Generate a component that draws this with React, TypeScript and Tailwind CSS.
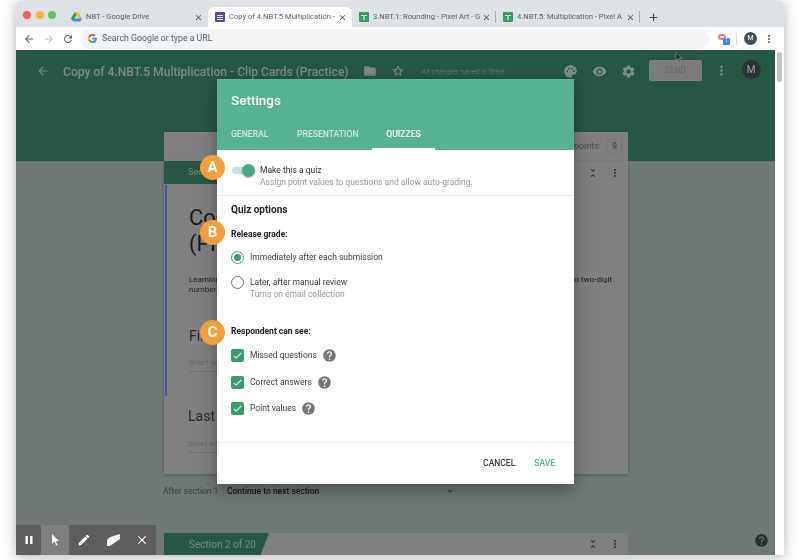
import React from "react";
import {
  MdAdd,
  MdArrowBack,
  MdArrowForward,
  MdCheck,
  MdClose,
  MdEdit,
  MdExpandMore,
  MdFolder,
  MdHelp,
  MdMoreVert,
  MdPalette,
  MdPause,
  MdRefresh,
  MdSettings,
  MdStarBorder,
  MdUnfoldLess,
  MdVisibility,
} from "react-icons/md";

const DriveLogo = () => (
  <svg width="11" height="10" viewBox="0 0 22 20">
    <path d="M7.5 0h7l7.5 13h-7z" fill="#f5bd2c" />
    <path d="M7.5 0l3.5 6.2L4 19 0 13z" fill="#1fa463" />
    <path d="M7.5 13H22l-3.5 6H4z" fill="#4285f4" />
  </svg>
);

const FormsLogo = () => (
  <div className="w-[10px] h-[10px] rounded-[1px] bg-[#5b3fb5] flex flex-col justify-center items-center gap-[1px]">
    <div className="w-[6px] h-[1px] bg-white" />
    <div className="w-[6px] h-[1px] bg-white" />
    <div className="w-[6px] h-[1px] bg-white" />
  </div>
);

const SheetsLogo = () => (
  <svg width="10" height="10" viewBox="0 0 10 10">
    <rect width="10" height="10" rx="1" fill="#2f9e5b" />
    <path d="M2 3h6v1H5.5v4h-1V4H2z" fill="#fff" />
  </svg>
);

const GoogleG = () => (
  <svg width="9" height="9" viewBox="0 0 18 18">
    <path d="M17.6 9.2c0-.6-.1-1.2-.2-1.8H9v3.5h4.8c-.2 1.100-.8 2.100-1.800 2.700v2.200h2.900c1.700-1.600 2.700-3.900 2.700-6.600z" fill="#4285f4" />
    <path d="M9 18c2.400 0 4.500-.8 5.900-2.200L12 13.600c-.8.500-1.800.9-3 .9-2.300 0-4.300-1.600-5-3.700H1v2.300C2.500 16 5.500 18 9 18z" fill="#34a853" />
    <path d="M4 10.700c-.4-1.100-.4-2.300 0-3.400V5H1C-.3 7.500-.3 10.500 1 13z" fill="#fbbc05" />
    <path d="M9 3.600c1.300 0 2.500.5 3.400 1.300L15 2.400C13.400.9 11.300 0 9 0 5.500 0 2.500 2 1 5l3 2.300c.7-2.100 2.700-3.700 5-3.700z" fill="#ea4335" />
  </svg>
);

const Tab = (props: { icon: React.ReactNode; title: string; active?: boolean; divider?: boolean }) => (
  <div className={`w-[144px] h-[20px] flex items-center pl-[7px] shrink-0 relative ${props.active ? "bg-white rounded-t-[6px]" : ""}`}>
    {props.icon}
    <div className="ml-[4px] whitespace-nowrap text-[7.6px] text-[#5f6368]">{props.title}</div>
    <MdClose className="absolute right-[5px] text-[#4a4a4a]" size={9} />
    {props.divider && <div className="absolute right-0 h-[12px] w-px bg-[#a9acb0]" />}
  </div>
);

const Badge = (props: { letter: string; className: string }) => (
  <div className={`absolute left-[184px] w-[25px] h-[25px] rounded-full bg-[#f0a03c] text-white font-bold text-[15px] flex justify-center items-center ${props.className}`}>
    {props.letter}
  </div>
);

const CheckRow = (props: { label: string; className: string }) => (
  <div className={`flex items-center h-4 ${props.className}`}>
    <div className="w-[13px] h-[13px] rounded-[2px] bg-[#3f9a70] flex justify-center items-center">
      <MdCheck className="text-white" size={11} />
    </div>
    <span className="ml-[6px] text-[8.5px] text-[#444]">{props.label}</span>
    <MdHelp className="ml-[5px] text-[#777]" size={15} />
  </div>
);

export default function App() {
  return (
    <div className="w-[800px] h-[560px] bg-white overflow-hidden pl-4 pt-px font-[Roboto,sans-serif] blur-[0.4px]">
      <div className="w-[768px] h-[554px] flex flex-col bg-white shadow-[0_2px_14px_rgba(0,0,0,0.3)] rounded-t-[4px]">
        {/* tab strip */}
        <div className="h-[26px] bg-[#dee1e6] flex items-end rounded-t-[4px] shrink-0">
          <div className="w-[48px] h-[26px] flex items-center pl-[7px] gap-[4.5px] pt-[1px]">
            <div className="w-[8px] h-[8px] rounded-full bg-[#ee5f57]" />
            <div className="w-[8px] h-[8px] rounded-full bg-[#f5b83d]" />
            <div className="w-[8px] h-[8px] rounded-full bg-[#5cc95a]" />
          </div>
          <Tab icon={<DriveLogo />} title="NBT - Google Drive" />
          <Tab active icon={<FormsLogo />} title="Copy of 4.NBT.5 Multiplication -" />
          <Tab divider icon={<SheetsLogo />} title="3.NBT.1: Rounding - Pixel Art - G" />
          <Tab divider icon={<SheetsLogo />} title="4.NBT.5: Multiplication - Pixel A" />
          <MdAdd className="ml-[7px] mb-[3px] text-[#444]" size={13} />
        </div>

        {/* toolbar */}
        <div className="h-[23px] bg-white flex items-center shrink-0 pl-[7px]">
          <MdArrowBack className="text-[#5f6368]" size={12} />
          <MdArrowForward className="ml-2 text-[#bdc1c6]" size={12} />
          <MdRefresh className="ml-[7px] text-[#5f6368]" size={12} />
          <div className="ml-[6px] w-[629px] h-[20px] rounded-full bg-[#f1f3f4] flex items-center pl-[8px]">
            <GoogleG />
            <span className="ml-[5px] text-[8.75px] text-[#5f6368]">Search Google or type a URL</span>
          </div>
          <div className="relative ml-[9px] w-[10px] h-[10px]">
            <div className="w-[8px] h-[6px] rounded-full border-2 border-[#ef7b7b]" />
            <div className="absolute left-[5px] top-[4px] w-[7px] h-[7px] rounded-[1px] bg-[#4285f4] text-white text-[5px] flex justify-center items-center">1</div>
          </div>
          <div className="ml-[8px] h-[12px] w-px bg-[#dadce0]" />
          <div className="ml-[7px] w-[13px] h-[13px] rounded-full bg-[#3f4d57] text-white text-[7px] flex justify-center items-center">M</div>
          <MdMoreVert className="ml-[6px] text-[#5f6368]" size={12} />
        </div>

        {/* page */}
        <div className="flex flex-1 min-h-0">
          <div className="w-[759px] relative overflow-hidden bg-[#6f7875]">
            <div className="h-[111px] bg-[#285645] flex items-start pt-[11px] pl-[20px]">
              <MdArrowBack className="mt-[3px] text-[#6c8a7f]" size={14} />
              <div className="ml-[13px] mt-[1px] text-[12.1px] font-medium text-[#7c8a85] whitespace-nowrap leading-[20px]">Copy of 4.NBT.5 Multiplication - Clip Cards (Practice)</div>
              <MdFolder className="ml-[14px] mt-[3px] text-[#7c8a85]" size={14} />
              <MdStarBorder className="ml-[14px] mt-[3px] text-[#7c8a85]" size={14} />
              <div className="ml-[17px] mt-[1px] w-[84px] text-[7.4px] italic text-[#5f7f73] whitespace-nowrap leading-[20px]">All changes saved in Drive</div>
              <MdPalette className="ml-[57px] mt-[3px] text-[#7e8f89]" size={15} />
              <MdVisibility className="ml-[14px] mt-[3px] text-[#7e8f89]" size={15} />
              <MdSettings className="ml-[14px] mt-[3px] text-[#7e8f89]" size={15} />
              <div className="ml-[13px] -mt-[1px] w-[53px] h-[21px] rounded-[2px] bg-[#7b7b7b] text-[#696969] text-[8.5px] font-medium flex justify-center items-center">SEND</div>
              <MdMoreVert className="ml-[12px] mt-[2px] text-[#7e8f89]" size={15} />
              <div className="ml-[13px] -mt-[1px] w-[19px] h-[19px] rounded-full bg-[#2a3336] text-[#9aa3a5] text-[10px] flex justify-center items-center">M</div>
            </div>

            {/* dimmed form behind the dialog */}
            <div className="ml-[148px] w-[464px] -mt-[29px] flex flex-col">
              <div className="h-[29px] bg-[#7f7f7f] flex justify-end items-center pr-[6px] text-[9px] text-[#4c4c4c]">
                <span>points:</span>
                <div className="ml-[6px] w-[15px] h-[15px] rounded-[2px] border border-[#777] text-[#285645] font-medium flex justify-center items-center">9</div>
              </div>
              <div className="h-[313px] bg-[#7f7f7f] flex flex-col shadow-[0_1px_3px_rgba(0,0,0,0.25)]">
                <div className="h-[23px] flex items-center justify-between">
                  <div className="w-[105px] h-[23px] bg-[#285645] text-[#6f8c80] text-[9px] whitespace-nowrap flex items-center pl-[24px]">Section 1 of 20</div>
                  <div className="flex items-center gap-[10px] pr-[7px] text-[#333]">
                    <MdUnfoldLess size={12} />
                    <MdMoreVert size={12} />
                  </div>
                </div>
                <div className="ml-[1px] mt-[1px] h-[211px] border-l-2 border-[#3d5a9c] pl-[22px] flex flex-col">
                  <div className="mt-[20px] text-[22px] leading-[26px] text-[#1a1a1a]">
                    <div>Copy of 4.NBT.5</div>
                    <div>(Practice)</div>
                  </div>
                  <div className="mt-[18px] flex justify-between pr-[16px] text-[8px] leading-[10px] text-[#222]">
                    <div>Learning goal:<br />numbers</div>
                    <div>to two-digit</div>
                  </div>
                  <div className="mt-[32px] text-[14px] leading-[18px] text-[#2a2a2a]">First Name</div>
                  <div className="mt-[12px] text-[8px] text-[#666] border-b border-[#707070] w-[220px] pb-[2px]">Short answer text</div>
                </div>
                <div className="ml-[24px] mt-[11px] text-[14px] leading-[18px] text-[#2a2a2a]">Last Name</div>
                <div className="ml-[24px] mt-[13px] text-[8px] text-[#666] border-b border-[#707070] w-[220px] pb-[2px]">Short answer text</div>
              </div>
              <div className="mt-[9px] h-[16px] flex items-center text-[8.5px]">
                <span className="w-[63px] text-[#3d3d3d] -ml-[1px]">After section 1</span>
                <span className="ml-[1px] w-[218px] text-[#1a1a1a] font-medium">Continue to next section</span>
                <MdExpandMore className="text-[#333]" size={10} />
              </div>
              <div className="mt-[34px] h-[22px] flex bg-[#7f7f7f]">
                <div className="w-[105px] h-[22px] bg-[#285645] [clip-path:polygon(0_0,100%_0,92%_100%,0_100%)] text-[#6f8c80] text-[10px] whitespace-nowrap flex items-center pl-[25px]">Section 2 of 20</div>
                <div className="flex-1 flex justify-end items-center gap-[10px] pr-[7px] text-[#333]">
                  <MdUnfoldLess size={12} />
                  <MdMoreVert size={12} />
                </div>
              </div>
            </div>

            {/* annotation tools */}
            <div className="absolute left-0 bottom-0 h-[30px] w-[140px] bg-[#5e5e5e] flex items-center text-white">
              <div className="w-[25px] h-full flex justify-center items-center"><MdPause size={14} /></div>
              <div className="w-[28px] h-full bg-[#7f7f7f] flex justify-center items-center">
                <svg width="9" height="12" viewBox="0 0 9 12"><path d="M1 0l7 7H5l1.500 4-1.500.6L3.500 7.500 1 10z" fill="#f2f2f2" /></svg>
              </div>
              <div className="w-[29px] h-full flex justify-center items-center"><MdEdit size={14} /></div>
              <div className="w-[29px] h-full flex justify-center items-center">
                <svg width="14" height="12" viewBox="0 0 14 12"><path d="M4 3l10-3v5L4 12H1V6z" fill="#f2f2f2" /></svg>
              </div>
              <div className="w-[29px] h-full flex justify-center items-center"><MdClose size={14} /></div>
            </div>

            <MdHelp className="absolute right-[6px] bottom-[7px] text-[#2b3030]" size={15} />

            {/* mouse pointer */}
            <svg className="absolute left-[659px] top-[2px]" width="8" height="11" viewBox="0 0 10 13">
              <path d="M1 0l7.500 7.500H5.200l1.800 4-1.400.7-1.800-4.200L1 10.500z" fill="#1f2a2a" stroke="#cfd4d4" strokeWidth="0.5" />
            </svg>

            {/* settings dialog */}
            <div className="absolute left-[201px] top-[29px] w-[357px] h-[405px] bg-white flex flex-col shadow-[0_6px_16px_rgba(0,0,0,0.35)]">
              <div className="h-[71px] bg-[#55b392] shrink-0 flex flex-col pl-[14px]">
                <div className="mt-[12px] text-[13.5px] font-medium leading-[18px] text-white">Settings</div>
                <div className="mt-[18px] flex text-[8.6px] font-medium leading-[12px] h-[23px]">
                  <div className="w-[66px] pt-[1px] text-[#c9e8dc]">GENERAL</div>
                  <div className="w-[75px] pt-[1px] text-[#c9e8dc]">PRESENTATION</div>
                  <div className="w-[63px] pt-[1px] text-center text-white border-b-2 border-white">QUIZZES</div>
                </div>
              </div>
              <div className="flex-1 flex flex-col min-h-0">
                <div className="h-[46px] border-b border-[#ececec] pt-[14px] pl-[15px] flex shrink-0">
                  <div className="relative w-[23px] h-[12px] flex items-center">
                    <div className="w-[22px] h-[7px] rounded-full bg-[#c4e4d8]" />
                    <div className="absolute right-0 w-[13px] h-[13px] rounded-full bg-[#47a886] shadow-[0_1px_2px_rgba(0,0,0,0.3)]" />
                  </div>
                  <div className="ml-[5px] text-[8.5px] leading-[12px]">
                    <div className="text-[#333]">Make this a quiz</div>
                    <div className="text-[#9a9a9a]">Assign point values to questions and allow auto-grading.</div>
                  </div>
                </div>
                <div className="pl-[14px] flex flex-col">
                  <div className="mt-[8px] h-[12px] leading-[12px] text-[10px] font-bold text-[#222]">Quiz options</div>
                  <div className="mt-[12px] h-[12px] leading-[12px] text-[8.5px] font-bold text-[#222]">Release grade:</div>
                  <div className="mt-[9px] h-[16px] flex items-center">
                    <div className="w-[13px] h-[13px] rounded-full border-[1.5px] border-[#3f9a70] flex justify-center items-center">
                      <div className="w-[7px] h-[7px] rounded-full bg-[#3f9a70]" />
                    </div>
                    <span className="ml-[6px] text-[8.5px] text-[#444]">Immediately after each submission</span>
                  </div>
                  <div className="mt-[10px] h-[14px] flex items-center">
                    <div className="w-[13px] h-[13px] rounded-full border-[1.5px] border-[#777]" />
                    <span className="ml-[6px] text-[8.5px] text-[#444]">Later, after manual review</span>
                  </div>
                  <div className="ml-[19px] -mt-[1px] h-[12px] leading-[12px] text-[8.5px] text-[#9a9a9a]">Turns on email collection</div>
                  <div className="mt-[25px] h-[12px] leading-[12px] text-[8.5px] font-bold text-[#222]">Respondent can see:</div>
                  <CheckRow label="Missed questions" className="mt-[10px]" />
                  <CheckRow label="Correct answers" className="mt-[11px]" />
                  <CheckRow label="Point values" className="mt-[10px]" />
                </div>
                <div className="mt-auto h-[42px] border-t border-[#ececec] flex justify-end items-center pr-[19px] gap-[19px] text-[8.5px] font-medium shrink-0">
                  <span className="text-[#3a3a3a]">CANCEL</span>
                  <span className="text-[#55b392]">SAVE</span>
                </div>
              </div>
            </div>

            <Badge letter="A" className="top-[105px]" />
            <Badge letter="B" className="top-[170px]" />
            <Badge letter="C" className="top-[270px]" />
          </div>
          <div className="flex-1 bg-white pt-[2px] pl-[2px]">
            <div className="w-[5px] h-[30px] rounded-full bg-[#c4c4c4]" />
          </div>
        </div>
      </div>
    </div>
  );
}
